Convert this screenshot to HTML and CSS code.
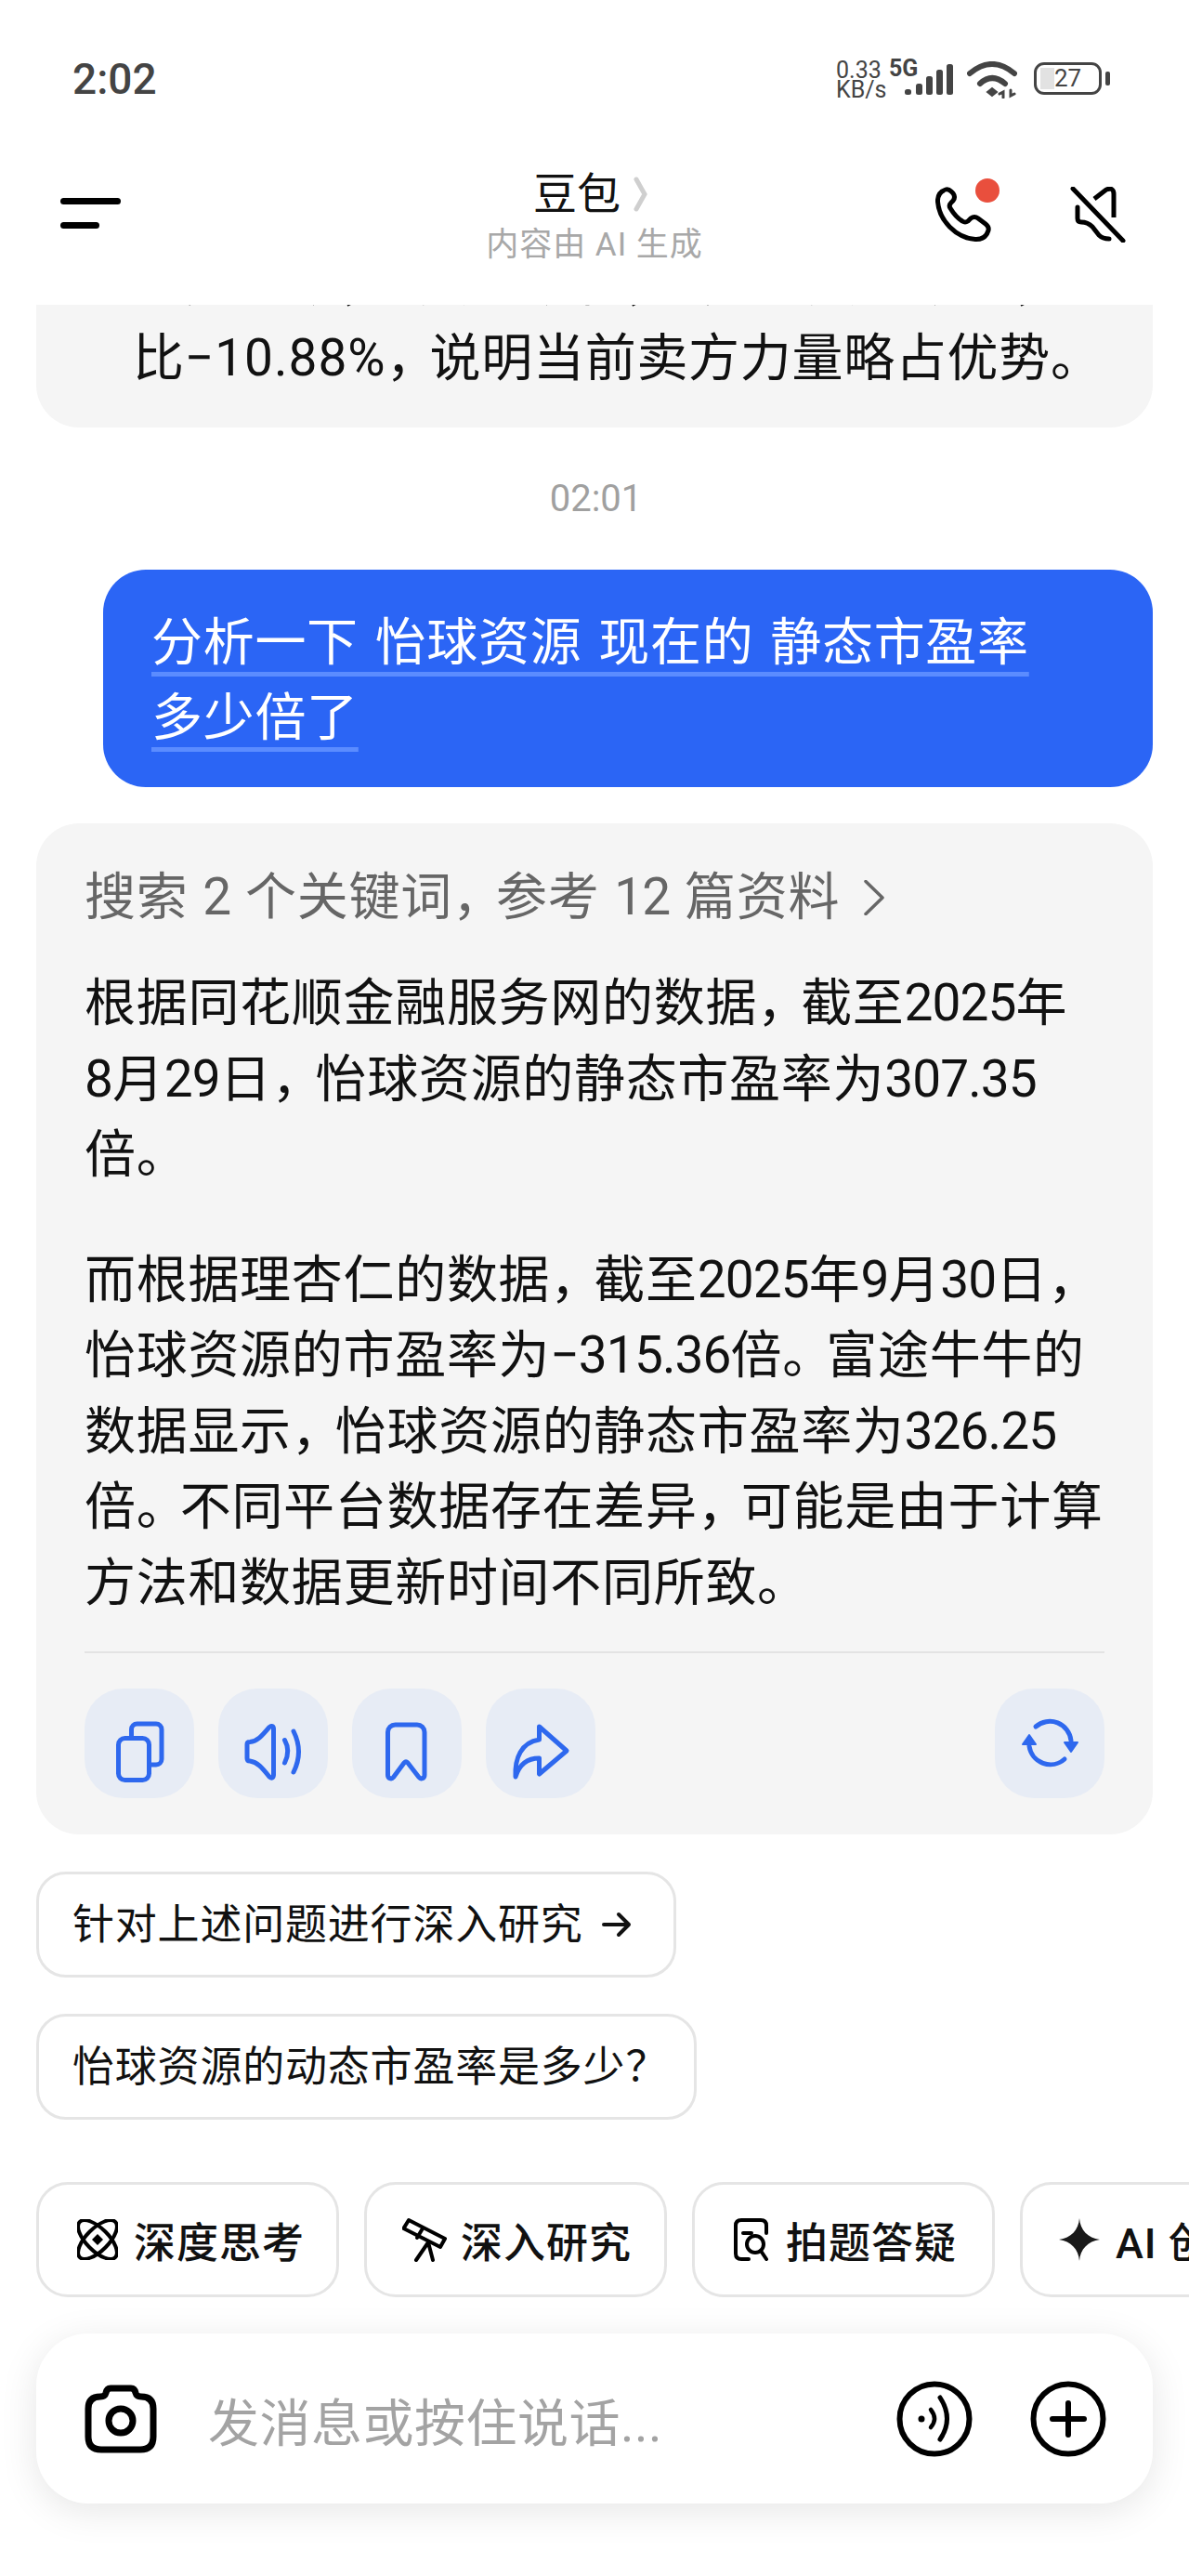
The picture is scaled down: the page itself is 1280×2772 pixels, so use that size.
FILE: index.html
```html
<!DOCTYPE html>
<html lang="zh-CN">
<head>
  <meta charset="UTF-8">
  <title>豆包</title>
  <meta name="viewport" content="width=device-width, initial-scale=1">
  <link rel="stylesheet" href="styles.css">
</head>
<body>
<div class="phone">

  <div class="status">
    <div class="clock">2:02</div>
    <div class="status-right">
      <div class="speed">0.33<br>KB/s</div>
      <div class="net">5G</div>
      <svg class="signal" width="52" height="33" viewBox="0 0 52 33" fill="#444">
        <rect x="0" y="27" width="7" height="6" rx="2.5"/>
        <rect x="12" y="21" width="7" height="12" rx="2.5"/>
        <rect x="23" y="13" width="7" height="20" rx="2.5"/>
        <rect x="34" y="6" width="7" height="27" rx="2.5"/>
        <rect x="45" y="0" width="7" height="33" rx="2.5"/>
      </svg>
      <svg class="wifi" width="54" height="40" viewBox="0 0 54 40" fill="none" stroke="#444" stroke-linecap="round">
        <path d="M3 13 Q27 -7 51 13" stroke-width="6"/>
        <path d="M14 24 Q27 12 41 24" stroke-width="6"/>
        <path d="M22 33 L27 29 L32 33 L27 37 Z" fill="#444" stroke-width="2"/>
        <path d="M39 39 V33 L35 35 M47 31 V37 L51 35" stroke-width="3"/>
      </svg>
      <div class="battery"><span class="battery-fill"></span><span class="battery-num">27</span></div>
    </div>
  </div>

  <div class="nav">
    <div class="menu"><span class="menu-long"></span><span class="menu-short"></span></div>
    <div class="nav-title">
      <div class="title-row">豆包
        <svg width="16" height="38" viewBox="0 0 16 38" fill="none" stroke="#cfcfcf" stroke-width="5" stroke-linecap="round"><path d="M3 3 L12 19 L3 35"/></svg>
      </div>
      <div class="title-sub">内容由 AI 生成</div>
    </div>
    <div class="nav-icons">
      <div class="phone-icon">
        <svg width="60" height="60" viewBox="0 0 60 60" fill="none" stroke="#000" stroke-width="5" stroke-linejoin="round">
          <path d="M11 3 Q2 6 2.500 16 C4 36 22 55 43 56.500 Q54 57 57 47 Q58 43 54 40 L46 34 Q42 31 38 34 L35 37 Q32 39 29 37 C24 34 19 28 16 23 Q14 20 17 17 L19 15 Q22 11 19 7 L17 5 Q14 2 11 3 Z"/>
        </svg>
        <span class="red-dot"></span>
      </div>
      <svg width="60" height="60" viewBox="0 0 60 60" fill="none" stroke="#000" stroke-width="5" stroke-linecap="round" stroke-linejoin="round">
        <path d="M3 2 L57 58"/>
        <path d="M26 13 L39 3 Q47 0 47 8 V33" stroke-linecap="butt"/>
        <path d="M8 22 V34 Q8 38 12 38 Q19 38 24 43 L31 52 Q35 56 42 56"/>
      </svg>
    </div>
  </div>

  <div class="chat">
    <div class="card card-cut">
      <div>委买手数<span class="halt">，</span>委卖手数和<span class="halt">，</span>委买委卖手数差<span class="halt">，</span>委</div>
      <div>比<span class="pct">−10.88%</span><span class="cm">，</span>说明当前卖方力量略占优势。</div>
    </div>

    <div class="time">02:01</div>

    <div class="user-msg">
      <span class="under">分析一下 怡球资源 现在的 静态市盈率</span><br>
      <span class="under">多少倍了</span>
    </div>

    <div class="card answer">
      <div class="search-line"><span>搜索 <span class="num">2</span> 个关键词<span class="cm">，</span>参考 <span class="num">12</span> 篇资料</span>
        <svg width="22" height="38" viewBox="0 0 22 38" fill="none" stroke="#666" stroke-width="3.500" stroke-linecap="round" stroke-linejoin="round"><path d="M2 1.500 L20 19 L2 36.500"/></svg>
      </div>
      <p>根据同花顺金融服务网的数据<span class="cm">，</span>截至<span class="num">2025</span>年<br><span class="num">8</span>月<span class="num">29</span>日<span class="cm">，</span>怡球资源的静态市盈率为<span class="num">307.35</span><br>倍。</p>
      <p>而根据理杏仁的数据<span class="cm">，</span>截至<span class="num">2025</span>年<span class="num">9</span>月<span class="num">30</span>日<span class="cm">，</span><br>怡球资源的市盈率为<span class="num">−315.36</span>倍<span class="cm">。</span>富途牛牛的<br>数据显示<span class="cm">，</span>怡球资源的静态市盈率为<span class="num">326.25</span><br>倍<span class="cm">。</span>不同平台数据存在差异<span class="cm">，</span>可能是由于计算<br>方法和数据更新时间不同所致。</p>
      <div class="divider"></div>
      <div class="actions">
        <div class="act">
          <svg width="118" height="118" viewBox="0 0 118 118" fill="none" stroke="#2e68ee" stroke-width="5" stroke-linejoin="round" stroke-linecap="round">
            <rect x="36.500" y="53.500" width="33" height="45" rx="7"/>
            <path d="M50.500 52 V44 A6 6 0 0 1 56.500 38 H77 A6 6 0 0 1 83 44 V76 A6 6 0 0 1 77 82 H71"/>
          </svg>
        </div>
        <div class="act">
          <svg width="118" height="118" viewBox="0 0 118 118" fill="none" stroke="#2e68ee" stroke-width="5" stroke-linejoin="round" stroke-linecap="round">
            <path d="M31 60 Q31 57.500 34 57.500 C42 57 47 51 55 41.500 Q59 39 59.500 43 V93 Q59 98 55 95 C47 85 42 79 34 78 Q31 78 31 75 Z"/>
            <path d="M71.500 55.500 Q78 67 71.500 80"/>
            <path d="M81 46 Q92 68 81 90"/>
          </svg>
        </div>
        <div class="act">
          <svg width="118" height="118" viewBox="0 0 118 118" fill="none" stroke="#2e68ee" stroke-width="5" stroke-linejoin="round">
            <path d="M38.500 47 A8 8 0 0 1 46.500 39 H70 A8 8 0 0 1 78 47 V93 C78 97 74 98 72 95.500 L60 80 Q58 78 56 80 L44.500 95.500 C42.500 98 38.500 97 38.500 93 Z"/>
          </svg>
        </div>
        <div class="act">
          <svg width="118" height="118" viewBox="0 0 118 118" fill="none" stroke="#2e68ee" stroke-width="5" stroke-linejoin="round">
            <path d="M57.500 41 L87 67 L57.500 92 V75 C44 75 36 82 32 95 C31 75 38 58 57.500 55 Z"/>
          </svg>
        </div>
        <div class="act act-right">
          <svg width="118" height="118" viewBox="0 0 118 118" fill="none" stroke="#2e68ee" stroke-width="5" stroke-linecap="round">
            <path d="M44 41 A23 23 0 0 1 82 56"/>
            <path d="M37 62 A23 23 0 0 0 75 76"/>
            <path d="M75 58 H89 L82 68 Z" fill="#2e68ee" stroke-width="2" stroke-linejoin="round"/>
            <path d="M30 60 H44 L37 50 Z" fill="#2e68ee" stroke-width="2" stroke-linejoin="round"/>
          </svg>
        </div>
      </div>
    </div>

    <div class="chip">针对上述问题进行深入研究
      <svg class="chip-arrow" width="32" height="30" viewBox="0 0 32 30" fill="none" stroke="#111" stroke-width="4" stroke-linecap="round" stroke-linejoin="round"><path d="M2 15 H29 M18 4 L29 15 L18 26"/></svg>
    </div>
    <div class="chip">怡球资源的动态市盈率是多少<span class="halt">？</span></div>
  </div>

  <div class="tools">
    <div class="tool">
      <svg width="44" height="44" viewBox="0 0 44 44" fill="none" stroke="#000" stroke-width="4">
        <ellipse cx="22" cy="22" rx="27" ry="12" transform="rotate(45 22 22)"/>
        <ellipse cx="22" cy="22" rx="27" ry="12" transform="rotate(-45 22 22)"/>
        <path d="M22 16 L28 22 L22 28 L16 22 Z" fill="#000" stroke="none"/>
      </svg>
      深度思考
    </div>
    <div class="tool tool-tele">
      <svg width="48" height="48" viewBox="0 0 48 48" fill="none" stroke="#000" stroke-width="4" stroke-linejoin="round" stroke-linecap="round">
        <path d="M7 3 L1.500 12 L41 32 L46 23 Z"/>
        <path d="M22 12 L16 22"/>
        <path d="M28 27 L15 46 M28 27 L33 46"/>
      </svg>
      深入研究
    </div>
    <div class="tool">
      <svg width="40" height="46" viewBox="0 0 40 46" fill="none" stroke="#000" stroke-width="4" stroke-linecap="round">
        <path d="M36 16 V8 Q36 2 30 2 H9 Q3 2 3 8 V38 Q3 44 9 44 H17"/>
        <path d="M11 16 H20"/>
        <circle cx="24" cy="28" r="9"/>
        <path d="M30 35 L36 44"/>
      </svg>
      拍题答疑
    </div>
    <div class="tool tool-star">
      <svg width="44" height="46" viewBox="0 0 44 46" fill="#1a1a1a">
        <path d="M22 0 C23 13 31 21 44 23 C31 25 23 33 22 46 C21 33 13 25 0 23 C13 21 21 13 22 0 Z"/>
      </svg>
      AI 创作
    </div>
  </div>

  <div class="composer">
    <svg width="78" height="74" viewBox="0 0 78 74" fill="none" stroke="#000" stroke-width="7" stroke-linejoin="round">
      <path d="M28 4 H50 Q54 4 55 9 Q56 13 61 13 Q74 13 74 26 V56 Q74 70 60 70 H18 Q4 70 4 56 V26 Q4 13 17 13 Q22 13 23 9 Q24 4 28 4 Z"/>
      <circle cx="39" cy="39" r="13"/>
    </svg>
    <div class="placeholder">发消息或按住说话...</div>
    <svg width="82" height="82" viewBox="0 0 82 82" fill="none" stroke="#000" stroke-width="6" stroke-linecap="round">
      <circle cx="41" cy="41" r="37.500"/>
      <circle cx="27" cy="41" r="3.500" fill="#000" stroke="none"/>
      <path d="M37 31 Q45 41 37 50" stroke-width="4.500"/>
      <path d="M47 18 Q62 41 47 63" stroke-width="5"/>
    </svg>
    <svg class="plus" width="82" height="82" viewBox="0 0 82 82" fill="none" stroke="#000" stroke-width="6" stroke-linecap="round">
      <circle cx="41" cy="41" r="37.500"/>
      <path d="M24 41 H58 M41 24 V58"/>
    </svg>
  </div>

</div>
</body>
</html>
```

FILE: styles.css
```css
* { box-sizing: border-box; }

body {
  margin: 0;
  background: #fff;
  color: #111;
  font-family: "Roboto", "Noto Sans CJK SC", sans-serif;
}

.phone {
  width: 1280px;
  height: 2772px;
  display: flex;
  flex-direction: column;
  overflow: hidden;
}

/* status bar */
.status {
  height: 170px;
  flex-shrink: 0;
  display: flex;
  justify-content: space-between;
  padding: 62px 94px 0 78px;
  color: #444;
}

.clock {
  font-size: 46px;
  line-height: 46px;
  font-weight: 500;
}

.status-right {
  display: flex;
  align-items: flex-start;
  height: 46px;
}

.speed {
  font-size: 25px;
  line-height: 21px;
  width: 57px;
  margin-top: 3px;
}

.net {
  font-size: 25px;
  line-height: 20px;
  font-weight: 700;
  width: 17px;
  margin-top: 2px;
  white-space: nowrap;
}

.signal { margin-top: 7px; }

.wifi {
  margin-top: 4px;
  margin-left: 15px;
}

.battery {
  position: relative;
  width: 73px;
  height: 35px;
  margin-top: 5px;
  margin-left: 18px;
  border: 3px solid #444;
  border-radius: 11px;
  font-size: 26px;
  line-height: 29px;
  text-align: center;
}

.battery::after {
  content: "";
  position: absolute;
  right: -12px;
  top: 7px;
  width: 5px;
  height: 15px;
  background: #444;
  border-radius: 2px;
}

.battery-fill {
  position: absolute;
  left: 4px;
  top: 3px;
  width: 15px;
  height: 23px;
  background: #e2e2e2;
}

.battery-num {
  position: relative;
}

/* nav */
.nav {
  height: 158px;
  flex-shrink: 0;
  display: flex;
  justify-content: space-between;
  padding: 0 68px 0 65px;
  position: relative;
}

.menu {
  display: flex;
  flex-direction: column;
  gap: 19px;
  padding-top: 43px;
}

.menu span {
  display: block;
  height: 7px;
  background: #000;
  border-radius: 4px;
}

.menu-long { width: 65px; }
.menu-short { width: 42px; }

.nav-title {
  position: absolute;
  left: 0;
  right: 0;
  top: 10px;
  text-align: center;
}

.title-row {
  font-size: 47px;
  line-height: 58px;
  display: flex;
  justify-content: center;
  align-items: center;
  gap: 14px;
  padding-right: 8px;
}

.title-sub {
  font-size: 35px;
  line-height: 44px;
  margin-top: 4px;
  color: #a8a8a8;
  letter-spacing: 1px;
}

.nav-icons {
  display: flex;
  gap: 85px;
  padding-top: 31px;
}

.phone-icon {
  position: relative;
  width: 60px;
  height: 60px;
}

.red-dot {
  position: absolute;
  left: 43px;
  top: -9px;
  width: 26px;
  height: 26px;
  border-radius: 50%;
  background: #e94f3d;
}

/* chat */
.chat {
  flex: 1;
  min-height: 0;
  overflow: hidden;
  padding: 0 39px;
  font-size: 55px;
  line-height: 81px;
  letter-spacing: 0.700px;
  white-space: nowrap;
}

.halt { font-feature-settings: "halt"; }

.cm { letter-spacing: -8px; }

.num { letter-spacing: -0.900px; }

.pct { letter-spacing: 1px; }

.card {
  background: #f5f5f5;
  border-radius: 46px;
}

.card-cut {
  margin-top: -64px;
  padding: 0 0 34px 104px;
}

.time {
  margin: 55px 0 54px;
  padding-left: 3px;
  font-size: 40px;
  line-height: 44px;
  letter-spacing: 0;
  color: #a0a0a0;
  text-align: center;
}

.user-msg {
  margin-left: 72px;
  padding: 38px 52px 34px;
  background: #2b65f5;
  border-radius: 46px;
  color: #fff;
}

.under {
  word-spacing: 3.500px;
  text-decoration: underline 5px #5b8cff;
  text-underline-offset: 13px;
  text-decoration-skip-ink: none;
}

.answer {
  margin-top: 39px;
  padding: 39px 52px 39px;
}

.search-line {
  display: flex;
  align-items: center;
  gap: 26px;
  color: #666;
  margin-bottom: 33px;
  word-spacing: 1.500px;
}

.answer p {
  margin: 0 0 53px;
  line-height: 81.500px;
}

.answer p:last-of-type { margin-bottom: 0; }

.divider {
  height: 2px;
  background: #e3e3e3;
  margin-top: 33px;
}

.actions {
  display: flex;
  gap: 26px;
  margin-top: 38px;
}

.act {
  width: 118px;
  height: 118px;
  background: #e7ecf5;
  border-radius: 42px;
}

.act svg { display: block; }

.act-right { margin-left: auto; }

.chip {
  display: flex;
  align-items: center;
  width: max-content;
  height: 114px;
  margin-top: 39px;
  padding: 0 50px 0 36px;
  border: 3px solid #e5e5e5;
  border-radius: 32px;
  font-size: 45px;
  letter-spacing: 0.800px;
}

.answer + .chip { margin-top: 40px; }

.chip-arrow { margin-left: 20px; margin-right: -5px; }

/* bottom tools */
.tools {
  flex-shrink: 0;
  display: flex;
  gap: 27px;
  height: 124px;
  margin: 0 0 39px;
  padding-left: 39px;
  overflow: hidden;
}

.tool {
  flex-shrink: 0;
  display: flex;
  align-items: center;
  gap: 17px;
  width: 326px;
  padding-left: 41px;
  border: 3px solid #e5e5e5;
  border-radius: 34px;
  font-size: 45px;
  font-weight: 500;
  letter-spacing: 1px;
  white-space: nowrap;
}

.tool-tele svg {
  margin: 0 -2px 0 -3px;
}

.tool-star svg {
  margin-left: -2px;
}

.composer {
  flex-shrink: 0;
  height: 183px;
  margin: 0 39px 78px;
  padding: 0 50px 0 52px;
  display: flex;
  align-items: center;
  background: #fff;
  border-radius: 56px;
  box-shadow: 0 8px 40px rgba(0, 0, 0, 0.1);
}

.placeholder {
  flex: 1;
  margin-left: 55px;
  font-size: 55px;
  letter-spacing: 0.500px;
  color: #a3a3a3;
}

.plus { margin-left: 62px; }
```
